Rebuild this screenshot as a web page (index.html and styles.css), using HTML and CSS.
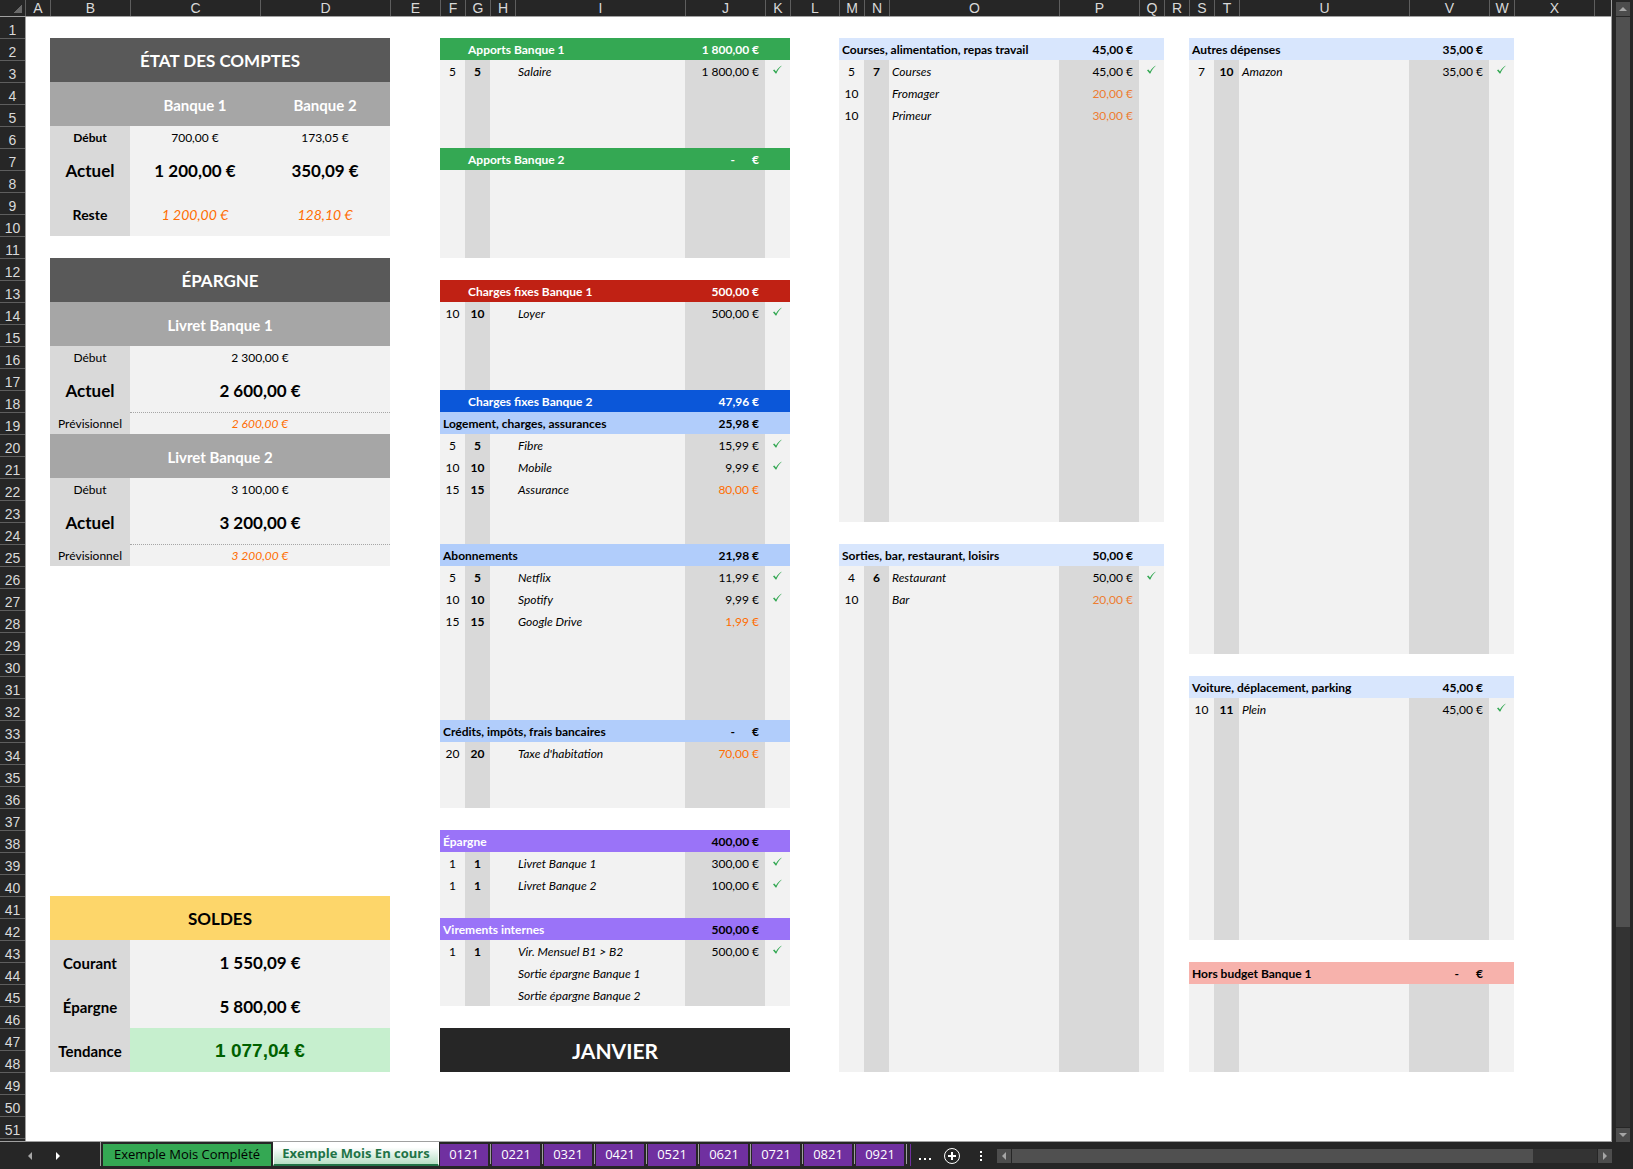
FILE: index.html
```html
<!DOCTYPE html>
<html lang="fr">
<head>
<meta charset="utf-8">
<title>Budget - Exemple Mois En cours</title>
<link rel="stylesheet" href="styles.css">
</head>
<body>
<svg class="defs" aria-hidden="true">
  <symbol id="tick" viewBox="0 0 9 9"><path d="M0 5.200 1.300 4.400 3 6.500C4.600 3.800 6.400 1.900 9 0.600 6.600 2.800 4.900 5.300 3.400 8.400H2.600z" fill="#34a853"/></symbol>
</svg>
<div class="workbook">
  <main class="window">
    <div class="columns">
      <span class="corner"></span>
      <span>A</span><span>B</span><span>C</span><span>D</span><span>E</span><span>F</span><span>G</span><span>H</span><span>I</span><span>J</span><span>K</span><span>L</span><span>M</span><span>N</span><span>O</span><span>P</span><span>Q</span><span>R</span><span>S</span><span>T</span><span>U</span><span>V</span><span>W</span><span>X</span><span></span>
    </div>
    <div class="body">
      <ol class="rows">
        <li>1</li><li>2</li><li>3</li><li>4</li><li>5</li><li>6</li><li>7</li><li>8</li><li>9</li><li>10</li><li>11</li><li>12</li><li>13</li><li>14</li><li>15</li><li>16</li><li>17</li><li>18</li><li>19</li><li>20</li><li>21</li><li>22</li><li>23</li><li>24</li><li>25</li><li>26</li><li>27</li><li>28</li><li>29</li><li>30</li><li>31</li><li>32</li><li>33</li><li>34</li><li>35</li><li>36</li><li>37</li><li>38</li><li>39</li><li>40</li><li>41</li><li>42</li><li>43</li><li>44</li><li>45</li><li>46</li><li>47</li><li>48</li><li>49</li><li>50</li><li>51</li>
      </ol>
      <div class="sheet">
        <section class="stack summary-stack">
          <table class="summary">
            <colgroup><col class="label"><col class="value"><col class="value"></colgroup>
            <tr class="title"><th colspan="3">ÉTAT DES COMPTES</th></tr>
            <tr class="bank"><th></th><th>Banque 1</th><th>Banque 2</th></tr>
            <tr><th class="strong">Début</th><td>700,00 €</td><td>173,05 €</td></tr>
            <tr class="current"><th>Actuel</th><td>1 200,00 €</td><td>350,09 €</td></tr>
            <tr class="rest"><th>Reste</th><td>1 200,00 €</td><td>128,10 €</td></tr>
          </table>
          <table class="summary">
            <colgroup><col class="label"><col class="value"><col class="value"></colgroup>
            <tr class="title"><th colspan="3">ÉPARGNE</th></tr>
            <tr class="bank"><th colspan="3">Livret Banque 1</th></tr>
            <tr><th>Début</th><td colspan="2">2 300,00 €</td></tr>
            <tr class="current"><th>Actuel</th><td colspan="2">2 600,00 €</td></tr>
            <tr class="forecast"><th>Prévisionnel</th><td colspan="2">2 600,00 €</td></tr>
            <tr class="bank"><th colspan="3">Livret Banque 2</th></tr>
            <tr><th>Début</th><td colspan="2">3 100,00 €</td></tr>
            <tr class="current"><th>Actuel</th><td colspan="2">3 200,00 €</td></tr>
            <tr class="forecast"><th>Prévisionnel</th><td colspan="2">3 200,00 €</td></tr>
          </table>
          <table class="summary balance">
            <colgroup><col class="label"><col class="value"><col class="value"></colgroup>
            <tr class="title gold"><th colspan="3">SOLDES</th></tr>
            <tr class="total"><th>Courant</th><td colspan="2">1 550,09 €</td></tr>
            <tr class="total"><th>Épargne</th><td colspan="2">5 800,00 €</td></tr>
            <tr class="total trend"><th>Tendance</th><td colspan="2">1 077,04 €</td></tr>
          </table>
        </section>

        <section class="stack fixed-stack">
          <table class="ledger">
            <colgroup><col class="day"><col class="day"><col class="day"><col class="name"><col class="amount"><col class="day"></colgroup>
            <tr class="head green"><th></th><th colspan="3">Apports Banque 1</th><td>1 800,00 €</td><td></td></tr>
            <tr><td>5</td><td>5</td><td></td><td>Salaire</td><td>1 800,00 €</td><td><svg><use href="#tick"/></svg></td></tr>
            <tr class="blank-3"><td></td><td></td><td></td><td></td><td></td><td></td></tr>
            <tr class="head green"><th></th><th colspan="3">Apports Banque 2</th><td><span class="dash">-</span>€</td><td></td></tr>
            <tr class="blank-4"><td></td><td></td><td></td><td></td><td></td><td></td></tr>
          </table>
          <table class="ledger">
            <colgroup><col class="day"><col class="day"><col class="day"><col class="name"><col class="amount"><col class="day"></colgroup>
            <tr class="head red"><th></th><th colspan="3">Charges fixes Banque 1</th><td>500,00 €</td><td></td></tr>
            <tr><td>10</td><td>10</td><td></td><td>Loyer</td><td>500,00 €</td><td><svg><use href="#tick"/></svg></td></tr>
            <tr class="blank-3"><td></td><td></td><td></td><td></td><td></td><td></td></tr>
            <tr class="head blue"><th></th><th colspan="3">Charges fixes Banque 2</th><td>47,96 €</td><td></td></tr>
            <tr class="head sky"><th colspan="4">Logement, charges, assurances</th><td>25,98 €</td><td></td></tr>
            <tr><td>5</td><td>5</td><td></td><td>Fibre</td><td>15,99 €</td><td><svg><use href="#tick"/></svg></td></tr>
            <tr><td>10</td><td>10</td><td></td><td>Mobile</td><td>9,99 €</td><td><svg><use href="#tick"/></svg></td></tr>
            <tr class="due"><td>15</td><td>15</td><td></td><td>Assurance</td><td>80,00 €</td><td></td></tr>
            <tr class="blank-2"><td></td><td></td><td></td><td></td><td></td><td></td></tr>
            <tr class="head sky"><th colspan="4">Abonnements</th><td>21,98 €</td><td></td></tr>
            <tr><td>5</td><td>5</td><td></td><td>Netflix</td><td>11,99 €</td><td><svg><use href="#tick"/></svg></td></tr>
            <tr><td>10</td><td>10</td><td></td><td>Spotify</td><td>9,99 €</td><td><svg><use href="#tick"/></svg></td></tr>
            <tr class="due"><td>15</td><td>15</td><td></td><td>Google Drive</td><td>1,99 €</td><td></td></tr>
            <tr class="blank-4"><td></td><td></td><td></td><td></td><td></td><td></td></tr>
            <tr class="head sky"><th colspan="4">Crédits, impôts, frais bancaires</th><td><span class="dash">-</span>€</td><td></td></tr>
            <tr class="due"><td>20</td><td>20</td><td></td><td>Taxe d'habitation</td><td>70,00 €</td><td></td></tr>
            <tr class="blank-2"><td></td><td></td><td></td><td></td><td></td><td></td></tr>
          </table>
          <table class="ledger">
            <colgroup><col class="day"><col class="day"><col class="day"><col class="name"><col class="amount"><col class="day"></colgroup>
            <tr class="head violet"><th colspan="4">Épargne</th><td>400,00 €</td><td></td></tr>
            <tr><td>1</td><td>1</td><td></td><td>Livret Banque 1</td><td>300,00 €</td><td><svg><use href="#tick"/></svg></td></tr>
            <tr><td>1</td><td>1</td><td></td><td>Livret Banque 2</td><td>100,00 €</td><td><svg><use href="#tick"/></svg></td></tr>
            <tr><td></td><td></td><td></td><td></td><td></td><td></td></tr>
            <tr class="head violet"><th colspan="4">Virements internes</th><td>500,00 €</td><td></td></tr>
            <tr><td>1</td><td>1</td><td></td><td>Vir. Mensuel B1 &gt; B2</td><td>500,00 €</td><td><svg><use href="#tick"/></svg></td></tr>
            <tr><td></td><td></td><td></td><td>Sortie épargne Banque 1</td><td></td><td></td></tr>
            <tr><td></td><td></td><td></td><td>Sortie épargne Banque 2</td><td></td><td></td></tr>
          </table>
          <h1 class="month">JANVIER</h1>
        </section>

        <section class="stack daily-stack">
          <table class="ledger">
            <colgroup><col class="day"><col class="day"><col class="name"><col class="amount"><col class="day"></colgroup>
            <tr class="head pale"><th colspan="3">Courses, alimentation, repas travail</th><td>45,00 €</td><td></td></tr>
            <tr><td>5</td><td>7</td><td>Courses</td><td>45,00 €</td><td><svg><use href="#tick"/></svg></td></tr>
            <tr class="due soft"><td>10</td><td></td><td>Fromager</td><td>20,00 €</td><td></td></tr>
            <tr class="due soft"><td>10</td><td></td><td>Primeur</td><td>30,00 €</td><td></td></tr>
            <tr class="blank-18"><td></td><td></td><td></td><td></td><td></td></tr>
          </table>
          <table class="ledger">
            <colgroup><col class="day"><col class="day"><col class="name"><col class="amount"><col class="day"></colgroup>
            <tr class="head pale"><th colspan="3">Sorties, bar, restaurant, loisirs</th><td>50,00 €</td><td></td></tr>
            <tr><td>4</td><td>6</td><td>Restaurant</td><td>50,00 €</td><td><svg><use href="#tick"/></svg></td></tr>
            <tr class="due soft"><td>10</td><td></td><td>Bar</td><td>20,00 €</td><td></td></tr>
            <tr class="blank-21"><td></td><td></td><td></td><td></td><td></td></tr>
          </table>
        </section>

        <section class="stack other-stack">
          <table class="ledger">
            <colgroup><col class="day"><col class="day"><col class="name"><col class="amount"><col class="day"></colgroup>
            <tr class="head pale"><th colspan="3">Autres dépenses</th><td>35,00 €</td><td></td></tr>
            <tr><td>7</td><td>10</td><td>Amazon</td><td>35,00 €</td><td><svg><use href="#tick"/></svg></td></tr>
            <tr class="blank-26"><td></td><td></td><td></td><td></td><td></td></tr>
          </table>
          <table class="ledger">
            <colgroup><col class="day"><col class="day"><col class="name"><col class="amount"><col class="day"></colgroup>
            <tr class="head pale"><th colspan="3">Voiture, déplacement, parking</th><td>45,00 €</td><td></td></tr>
            <tr><td>10</td><td>11</td><td>Plein</td><td>45,00 €</td><td><svg><use href="#tick"/></svg></td></tr>
            <tr class="blank-10"><td></td><td></td><td></td><td></td><td></td></tr>
          </table>
          <table class="ledger">
            <colgroup><col class="day"><col class="day"><col class="name"><col class="amount"><col class="day"></colgroup>
            <tr class="head pink"><th colspan="3">Hors budget Banque 1</th><td><span class="dash">-</span>€</td><td></td></tr>
            <tr class="blank-4"><td></td><td></td><td></td><td></td><td></td></tr>
          </table>
        </section>
      </div>
    </div>
  </main>
  <div class="vscroll">
    <button class="arrow" aria-label="Défiler vers le haut"><svg viewBox="0 0 14 14"><path d="M3 9h8L7 5z"/></svg></button>
    <div class="track"><div class="thumb"></div></div>
    <button class="arrow" aria-label="Défiler vers le bas"><svg viewBox="0 0 14 14"><path d="M3 5h8L7 9z"/></svg></button>
  </div>
</div>
<footer class="tabbar">
  <button class="step" aria-label="Feuille précédente"><svg viewBox="0 0 8 8"><path d="M6 0v8L2 4z" fill="#a6a6a6"/></svg></button>
  <button class="step" aria-label="Feuille suivante"><svg viewBox="0 0 8 8"><path d="M2 0v8l4-4z" fill="#fff"/></svg></button>
  <nav class="tabs">
    <a class="tab done" href="#">Exemple Mois Complété</a>
    <a class="tab active" href="#">Exemple Mois En cours</a>
    <span class="slot"><a class="tab" href="#">0121</a></span>
    <span class="slot"><a class="tab" href="#">0221</a></span>
    <span class="slot"><a class="tab" href="#">0321</a></span>
    <span class="slot"><a class="tab" href="#">0421</a></span>
    <span class="slot"><a class="tab" href="#">0521</a></span>
    <span class="slot"><a class="tab" href="#">0621</a></span>
    <span class="slot"><a class="tab" href="#">0721</a></span>
    <span class="slot"><a class="tab" href="#">0821</a></span>
    <span class="slot"><a class="tab" href="#">0921</a></span>
    <span class="sliver"></span>
  </nav>
  <button class="tool" aria-label="Autres feuilles"><svg viewBox="0 0 18 18"><path d="M3 11h2v2H3zm5 0h2v2H8zm5 0h2v2h-2z" fill="#fff"/></svg></button>
  <button class="tool" aria-label="Nouvelle feuille"><svg viewBox="0 0 18 18"><circle cx="9" cy="9" r="7.500" fill="none" stroke="#fff"/><path d="M8 5h2v3h3v2h-3v3H8v-3H5V8h3z" fill="#fff"/></svg></button>
  <span class="grip"><svg viewBox="0 0 18 18"><path d="M8 4h2v2H8zm0 4h2v2H8zm0 4h2v2H8z" fill="#fff"/></svg></span>
  <div class="hscroll">
    <button class="arrow" aria-label="Défiler vers la gauche"><svg viewBox="0 0 14 14"><path d="M9 3v8L5 7z"/></svg></button>
    <div class="track"><div class="thumb"></div></div>
    <button class="arrow" aria-label="Défiler vers la droite"><svg viewBox="0 0 14 14"><path d="M5 3v8l4-4z"/></svg></button>
  </div>
</footer>
</body>
</html>
```

FILE: styles.css
```css
* { box-sizing: border-box; }

body {
  margin: 0;
  min-height: 100vh;
  display: flex;
  flex-direction: column;
  background: #262626;
  color: #000;
  font: 12px/20px Lato, "Open Sans", sans-serif;
}

button { padding: 0; border: 0; background: none; font: inherit; }
svg { display: block; }
.defs { position: absolute; width: 0; height: 0; }

.workbook { display: flex; flex: 1; }

.window {
  flex: 1;
  min-width: 0;
  display: flex;
  flex-direction: column;
  background: #fff;
  border-right: 1px solid #a0a0a0;
  border-bottom: 1px solid #a0a0a0;
}

/* Column letters */
.columns {
  display: grid;
  grid-template-columns:
    26px 24fr 80fr 130fr 130fr 50fr
    25fr 25fr 25fr 170fr 80fr 25fr 49fr
    25fr 25fr 170fr 80fr 25fr 25fr
    25fr 25fr 170fr 80fr 25fr 80fr 17fr;
  height: 17px;
  background: #262626;
  border-bottom: 1px solid #a0a0a0;
  color: #d9d9d9;
  font: 14px/16px "Liberation Sans", Arial, sans-serif;
  text-align: center;
}
.columns span { border-left: 1px solid #5e5e5e; min-width: 0; }
.columns .corner {
  border-left: 0;
  border-right: 1px solid #5e5e5e;
  background: linear-gradient(135deg, #262626 50%, #6a6a6a 50%) 13px 4px / 9px 9px no-repeat;
}
.columns .corner + span { border-left: 0; }

.body { display: flex; flex: 1; }

/* Row numbers */
.rows {
  width: 26px;
  margin: 0;
  padding: 0;
  list-style: none;
  background: #262626;
  border-right: 1px solid #a0a0a0;
  color: #d9d9d9;
  font: 14px/16px "Liberation Sans", Arial, sans-serif;
  text-align: center;
}
.rows li { height: 22px; padding-top: 5px; border-top: 1px solid #5e5e5e; }
.rows li:first-child { height: 21px; border-top: 0; }
.rows li:last-child { height: 23px; border-bottom: 1px solid #5e5e5e; }

.sheet {
  flex: 1;
  display: grid;
  grid-template-columns: 24fr 340fr 50fr 350fr 49fr 325fr 25fr 325fr 97fr;
  align-items: stretch;
  align-content: start;
  padding-top: 21px;
}
.stack { display: flex; flex-direction: column; gap: 22px; min-width: 0; }
.summary-stack { grid-column: 2; }
.fixed-stack { grid-column: 4; }
.daily-stack { grid-column: 6; }
.other-stack { grid-column: 8; }

table {
  width: 100%;
  table-layout: fixed;
  border-collapse: separate;
  border-spacing: 0;
  background: #f2f2f2;
}
th, td { padding: 2px 0 0; overflow: hidden; white-space: nowrap; }
tr { height: 22px; }

/* Account summaries */
.label { width: 80px; }
.value { width: 130px; }
.summary th { background: #d9d9d9; font-weight: 400; }
.summary td { text-align: center; }
.summary .strong { font-weight: 700; }
.title, .bank, .current, .rest, .total { height: 44px; }
.summary .title th { background: #595959; color: #fff; font-size: 17px; font-weight: 700; }
.summary .bank th { background: #a6a6a6; color: #fff; font-size: 15px; font-weight: 700; }
.summary .title.gold th { background: #fdd66a; color: #000; }
.summary .current th, .current td { font-size: 17px; font-weight: 700; }
.summary .rest th { font-size: 14px; font-weight: 700; }
.rest td { font-size: 14px; }
.rest td, .forecast td { color: #ff6d01; font-style: italic; }
.forecast td { padding-top: 1px; border-top: 1px dotted #a6a6a6; }
.summary .total th { font-size: 15px; font-weight: 700; }
.total td { font-size: 17px; font-weight: 700; }
.trend td { background: #c6efce; color: #006100; font-family: "Liberation Sans", Arial, sans-serif; font-size: 19px; }
.balance { margin-top: auto; }

/* Ledgers */
.day { width: 25px; }
.name { width: 170px; }
.amount { width: 80px; }
.ledger td { text-align: center; }
.ledger td:nth-child(2) { font-weight: 700; }
.ledger td:nth-last-child(3) { padding-left: 3px; text-align: left; font-style: italic; }
.ledger td:nth-last-child(2) { padding-right: 6px; text-align: right; font-weight: 400; }
.ledger tr:not(.head) td:nth-child(2),
.ledger tr:not(.head) td:nth-last-child(2) { background: #d9d9d9; }
.ledger svg { width: 9px; height: 9px; margin: -5px auto 0; }
.ledger th { padding-left: 3px; text-align: left; font-weight: 700; }
.ledger .head td:nth-last-child(2) { font-weight: 700; }
.ledger .due td:nth-last-child(2) { color: #ff6d01; }
.ledger .soft td:nth-last-child(2) { color: #ed7d31; }
.dash { margin-right: 17px; }

.green { background: #34a853; color: #fff; }
.red { background: #c02114; color: #fff; }
.blue { background: #0b57d9; color: #fff; }
.sky { background: #b1cdfb; }
.pale { background: #d8e6fd; }
.violet { background: #9a73f8; }
.violet th { color: #fff; }
.pink { background: #f7b2ac; }

.blank-2 { height: 44px; }
.blank-3 { height: 66px; }
.blank-4 { height: 88px; }
.blank-10 { height: 220px; }
.blank-18 { height: 396px; }
.blank-21 { height: 462px; }
.blank-26 { height: 572px; }

.month {
  margin: 0;
  padding-top: 2px;
  background: #262626;
  color: #fff;
  font-size: 21px;
  line-height: 42px;
  text-align: center;
}

/* Scroll bars */
.arrow { width: 14px; height: 14px; background: #4d4d4d; }
.arrow svg { width: 14px; height: 14px; fill: #a6a6a6; }
.track { flex: 1; background: #333; }
.thumb { background: #505050; }
.vscroll { width: 21px; padding: 2px 3px 0 4px; display: flex; flex-direction: column; gap: 1px; }
.vscroll .thumb { height: 82%; }
.hscroll { flex: 1; display: flex; gap: 1px; margin-right: 21px; }
.hscroll .thumb { width: 89%; height: 14px; }

/* Sheet tabs */
.tabbar { display: flex; align-items: center; height: 27px; padding-left: 16px; }
.step { width: 28px; height: 20px; }
.step svg { width: 8px; height: 8px; margin: 0 auto; }
.tabs { display: flex; align-self: flex-start; margin-left: 28px; border-left: 1px solid #a0a0a0; }
.tab {
  display: block;
  height: 22px;
  background: #7030a0;
  color: #fff;
  font: 13px/20px "Open Sans", "Noto Sans", sans-serif;
  text-align: center;
  text-decoration: none;
  white-space: nowrap;
}
.slot {
  width: 52px;
  height: 20px;
  margin-top: 2px;
  padding: 0 2px 0 1px;
  border-right: 1px solid #a0a0a0;
}
.done { width: 168px; margin: 2px 2px 0; background: #34a853; color: #000; }
.active {
  width: 166px;
  height: 24px;
  border: 1px solid #fff;
  border-bottom: 2px solid #217346;
  background: linear-gradient(#fff 20%, #b7dfc4);
  color: #217346;
  font-weight: 700;
}
.sliver { width: 1px; height: 22px; margin: 2px 0 0 3px; background: #7030a0; }
.tool, .grip { width: 18px; height: 18px; }
.tool svg, .grip svg { width: 18px; height: 18px; }
.tabs + .tool { margin-left: 5px; }
.tool + .tool { margin-left: 9px; }
.grip { margin: 0 7px 0 11px; }
```
